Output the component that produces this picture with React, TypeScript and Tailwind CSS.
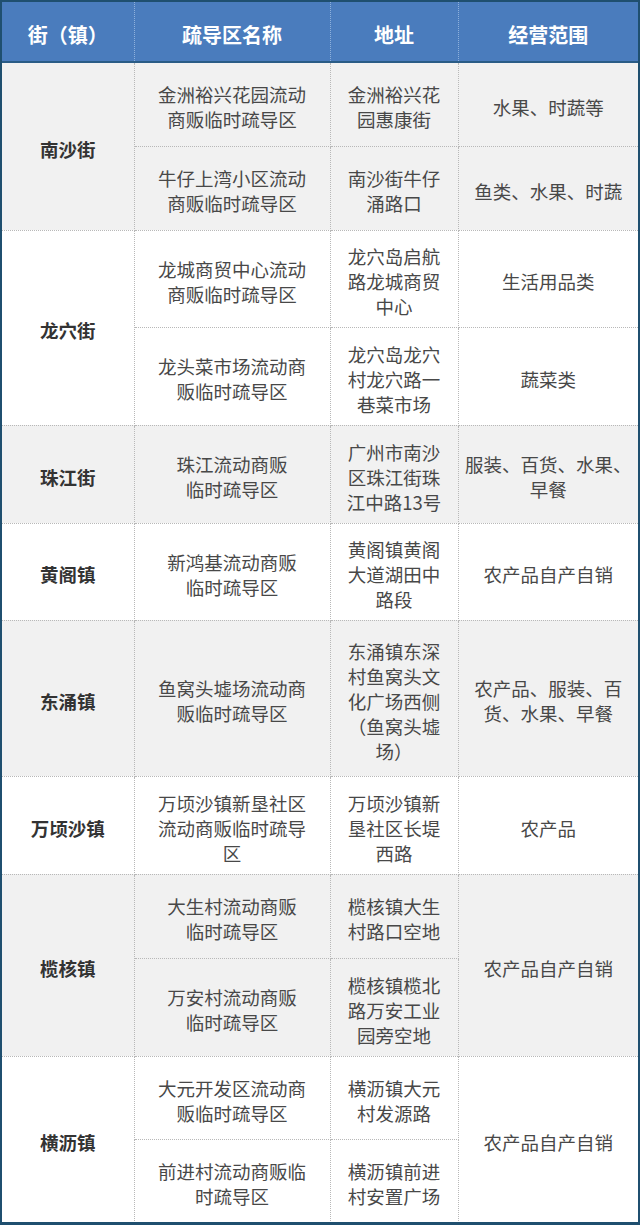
type Sub = { name: string[]; addr: string[]; scope?: string[]; h: string };
type Group = { town: string; bg: string; scope?: string[]; subs: Sub[] };

const groups: Group[] = [
  {
    town: '南沙街',
    bg: 'bg-[#f1f1f1]',
    subs: [
      { name: ['金洲裕兴花园流动', '商贩临时疏导区'], addr: ['金洲裕兴花', '园惠康街'], scope: ['水果、时蔬等'], h: 'h-[84px]' },
      { name: ['牛仔上湾小区流动', '商贩临时疏导区'], addr: ['南沙街牛仔', '涌路口'], scope: ['鱼类、水果、时蔬'], h: 'h-[84px]' },
    ],
  },
  {
    town: '龙穴街',
    bg: 'bg-white',
    subs: [
      { name: ['龙城商贸中心流动', '商贩临时疏导区'], addr: ['龙穴岛启航', '路龙城商贸', '中心'], scope: ['生活用品类'], h: 'h-[97px]' },
      { name: ['龙头菜市场流动商', '贩临时疏导区'], addr: ['龙穴岛龙穴', '村龙穴路一', '巷菜市场'], scope: ['蔬菜类'], h: 'h-[98px]' },
    ],
  },
  {
    town: '珠江街',
    bg: 'bg-[#f1f1f1]',
    subs: [
      { name: ['珠江流动商贩', '临时疏导区'], addr: ['广州市南沙', '区珠江街珠', '江中路13号'], scope: ['服装、百货、水果、', '早餐'], h: 'h-[98px]' },
    ],
  },
  {
    town: '黄阁镇',
    bg: 'bg-white',
    subs: [
      { name: ['新鸿基流动商贩', '临时疏导区'], addr: ['黄阁镇黄阁', '大道湖田中', '路段'], scope: ['农产品自产自销'], h: 'h-[97px]' },
    ],
  },
  {
    town: '东涌镇',
    bg: 'bg-[#f1f1f1]',
    subs: [
      {
        name: ['鱼窝头墟场流动商', '贩临时疏导区'],
        addr: ['东涌镇东深', '村鱼窝头文', '化广场西侧', '（鱼窝头墟', '场）'],
        scope: ['农产品、服装、百', '货、水果、早餐'],
        h: 'h-[156px]',
      },
    ],
  },
  {
    town: '万顷沙镇',
    bg: 'bg-white',
    subs: [
      { name: ['万顷沙镇新垦社区', '流动商贩临时疏导', '区'], addr: ['万顷沙镇新', '垦社区长堤', '西路'], scope: ['农产品'], h: 'h-[98px]' },
    ],
  },
  {
    town: '榄核镇',
    bg: 'bg-[#f1f1f1]',
    scope: ['农产品自产自销'],
    subs: [
      { name: ['大生村流动商贩', '临时疏导区'], addr: ['榄核镇大生', '村路口空地'], h: 'h-[84px]' },
      { name: ['万安村流动商贩', '临时疏导区'], addr: ['榄核镇榄北', '路万安工业', '园旁空地'], h: 'h-[98px]' },
    ],
  },
  {
    town: '横沥镇',
    bg: 'bg-white',
    scope: ['农产品自产自销'],
    subs: [
      { name: ['大元开发区流动商', '贩临时疏导区'], addr: ['横沥镇大元', '村发源路'], h: 'h-[83px]' },
      { name: ['前进村流动商贩临', '时疏导区'], addr: ['横沥镇前进', '村安置广场'], h: 'h-[83px]' },
    ],
  },
];

const cell = 'border border-dotted border-[#b8b8b8] text-center align-middle pt-[6px]';

function Lines({ lines }: { lines: string[] }) {
  return (
    <>
      {lines.map((l, i) => (
        <div key={i}>{l}</div>
      ))}
    </>
  );
}

export default function App() {
  return (
    <div
      className="w-[640px] h-[1225px] bg-white border-2 border-b-[3px] border-[#1f4f6f] overflow-hidden"
      style={{ fontFamily: '"Noto Sans CJK SC", "Noto Sans", sans-serif' }}
    >
      <table className="w-full table-fixed border-collapse text-[18.5px] leading-[25px] text-[#484848]">
        <colgroup>
          <col className="w-[132px]" />
          <col className="w-[196px]" />
          <col className="w-[128px]" />
          <col className="w-[180px]" />
        </colgroup>
        <thead>
          <tr className="h-[60px] bg-[#4a7cbd] text-white text-[20px] font-bold border-b-2 border-[#2a5c86]">
            <th className="border-r border-dotted border-[#8fb1dc] pt-[6px]">街（镇）</th>
            <th className="border-r border-dotted border-[#8fb1dc] pt-[6px]">疏导区名称</th>
            <th className="border-r border-dotted border-[#8fb1dc] pt-[6px]">地址</th>
            <th className="pt-[6px]">经营范围</th>
          </tr>
        </thead>
        <tbody>
          {groups.map((g) =>
            g.subs.map((s, i) => (
              <tr key={g.town + i} className={`${s.h} ${g.bg}`}>
                {i === 0 && (
                  <td rowSpan={g.subs.length} className={`${cell} border-l-0 font-bold text-[#333]`}>
                    {g.town}
                  </td>
                )}
                <td className={`${cell} px-5`}>
                  <Lines lines={s.name} />
                </td>
                <td className={`${cell} px-2`}>
                  <Lines lines={s.addr} />
                </td>
                {s.scope && (
                  <td className={`${cell} border-r-0 px-1`}>
                    <Lines lines={s.scope} />
                  </td>
                )}
                {!s.scope && i === 0 && g.scope && (
                  <td rowSpan={g.subs.length} className={`${cell} border-r-0 px-1`}>
                    <Lines lines={g.scope} />
                  </td>
                )}
              </tr>
            ))
          )}
        </tbody>
      </table>
    </div>
  );
}
